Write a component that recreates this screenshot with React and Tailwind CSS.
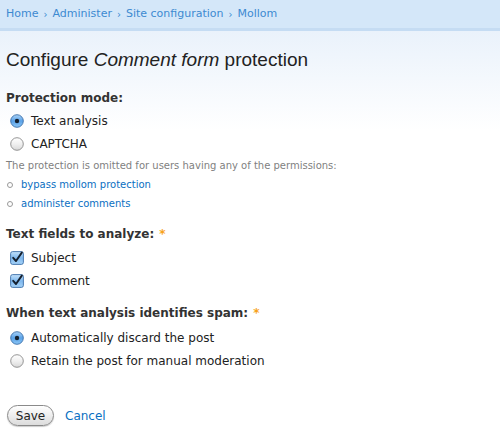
import React from 'react';

const bodyFont = { fontFamily: '"DejaVu Sans", Verdana, sans-serif' };

function Radio({ checked }) {
  return (
    <svg width="14" height="14" viewBox="0 0 14 14" className="shrink-0">
      <defs>
        <linearGradient id="radioOn" x1="0" y1="0" x2="0" y2="1">
          <stop offset="0" stopColor="#a9d2f7" />
          <stop offset="0.5" stopColor="#5aa2e8" />
          <stop offset="1" stopColor="#8cc6f5" />
        </linearGradient>
        <linearGradient id="radioOff" x1="0" y1="0" x2="0" y2="1">
          <stop offset="0" stopColor="#ffffff" />
          <stop offset="0.5" stopColor="#f0f0f0" />
          <stop offset="1" stopColor="#d8d8d8" />
        </linearGradient>
      </defs>
      <circle
        cx="7"
        cy="7"
        r="6.3"
        fill={checked ? 'url(#radioOn)' : 'url(#radioOff)'}
        stroke={checked ? '#3b6ea8' : '#8a8a8a'}
        strokeWidth="0.9"
      />
      {checked && <circle cx="7" cy="7" r="2.2" fill="#15202e" />}
    </svg>
  );
}

function Checkbox() {
  return (
    <svg width="14" height="14" viewBox="0 0 14 14" className="shrink-0">
      <defs>
        <linearGradient id="cbOn" x1="0" y1="0" x2="0" y2="1">
          <stop offset="0" stopColor="#c4e2fb" />
          <stop offset="0.5" stopColor="#7fb8ee" />
          <stop offset="1" stopColor="#a6d3f8" />
        </linearGradient>
      </defs>
      <rect x="0.6" y="0.6" width="12.8" height="12.8" rx="2" fill="url(#cbOn)" stroke="#3b6ea8" strokeWidth="0.9" />
      <path d="M3.2 6.8 L6 10 L11.8 1.6" fill="none" stroke="#15202e" strokeWidth="1.9" strokeLinecap="round" strokeLinejoin="round" />
    </svg>
  );
}

function Option({ type, checked, label }) {
  return (
    <div className="flex items-center h-[23px] pl-[4px] gap-[7px] text-[12px] text-[#222]">
      {type === 'radio' ? <Radio checked={checked} /> : <Checkbox />}
      <span>{label}</span>
    </div>
  );
}

function Label({ children, required }) {
  return (
    <div className="h-[18px] flex items-center text-[12px] font-bold text-[#333]">
      {children}
      {required && <span className="ml-[5px] text-[#f7a21b]">*</span>}
    </div>
  );
}

export default function App() {
  return (
    <div className="w-[500px] h-[436px] overflow-hidden bg-white" style={bodyFont}>
      <div className="h-[31px] bg-[#d4e7f9] border-b-[3px] border-[#c5dcf3] shadow-[0_1px_0_#ffffff] flex items-center px-[6px] text-[11px] text-[#3d8ad1]">
        <span>Home</span>
        <span className="mx-[5px] text-[10px]">›</span>
        <span>Administer</span>
        <span className="mx-[5px] text-[10px]">›</span>
        <span>Site configuration</span>
        <span className="mx-[5px] text-[10px]">›</span>
        <span>Mollom</span>
      </div>
      <div className="bg-gradient-to-b from-[#eaf2fb] to-white to-[100px] px-[6px] pt-[17px]">
        <h1 className="text-[19px] leading-[24px] text-[#222]" style={{ fontFamily: '"Liberation Sans", Arial, sans-serif' }}>
          Configure <em>Comment form</em> protection
        </h1>

        <div className="mt-[17px]">
          <Label>Protection mode:</Label>
          <div className="mt-[2px]">
            <Option type="radio" checked label="Text analysis" />
            <Option type="radio" label="CAPTCHA" />
          </div>
          <div className="mt-[1px] h-[19px] flex items-center text-[10px] text-[#7f7f7f]">
            The protection is omitted for users having any of the permissions:
          </div>
          <ul className="text-[10px]">
            <li className="h-[19px] flex items-center gap-[8px] pl-[1px]">
              <span className="w-[6px] h-[6px] rounded-full border border-[#999]"></span>
              <a className="text-[#0a6fc2]">bypass mollom protection</a>
            </li>
            <li className="h-[19px] flex items-center gap-[8px] pl-[1px]">
              <span className="w-[6px] h-[6px] rounded-full border border-[#999]"></span>
              <a className="text-[#0a6fc2]">administer comments</a>
            </li>
          </ul>
        </div>

        <div className="mt-[12px]">
          <Label required>Text fields to analyze:</Label>
          <div className="mt-[3px]">
            <Option type="checkbox" label="Subject" />
            <Option type="checkbox" label="Comment" />
          </div>
        </div>

        <div className="mt-[12px]">
          <Label required>When text analysis identifies spam:</Label>
          <div className="mt-[4px]">
            <Option type="radio" checked label="Automatically discard the post" />
            <Option type="radio" label="Retain the post for manual moderation" />
          </div>
        </div>

        <div className="mt-[33px] flex items-center gap-[11px] pl-[1px]">
          <button className="h-[21px] w-[47px] rounded-full border border-[#8a8a8a] bg-gradient-to-b from-white to-[#dcdcdc] text-[12px] text-[#222] shadow-[0_1px_1px_rgba(0,0,0,0.2)]">
            Save
          </button>
          <a className="text-[12px] text-[#0a6fc2]">Cancel</a>
        </div>
      </div>
    </div>
  );
}
